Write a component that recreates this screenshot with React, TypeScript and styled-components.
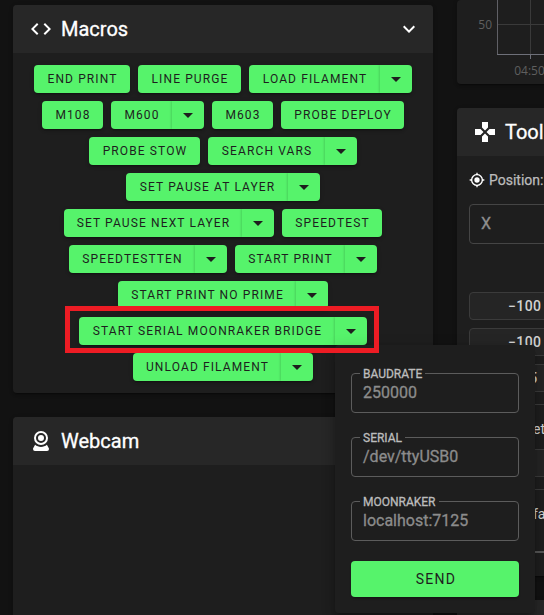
import React from 'react';
import styled, { createGlobalStyle } from 'styled-components';

const green = '#56f36b';

const GlobalStyle = createGlobalStyle`
  * { box-sizing: border-box; }
  body { margin: 0; background: #121212; overflow: hidden; }
`;

const Page = styled.div`
  position: relative;
  display: flex;
  gap: 24px;
  width: 544px;
  height: 615px;
  padding-left: 13px;
  overflow: hidden;
  background: #121212;
  color: #fff;
  font-family: Roboto, 'Liberation Sans', sans-serif;
`;

const Column = styled.div<{ $width: number; $top: number }>`
  display: flex;
  flex-direction: column;
  flex: none;
  gap: 24px;
  width: ${(p) => p.$width}px;
  padding-top: ${(p) => p.$top}px;
`;

const Card = styled.section<{ $height: number }>`
  flex: none;
  height: ${(p) => p.$height}px;
  border-radius: 4px;
  overflow: hidden;
  background: #1e1e1e;
  box-shadow: 0 3px 1px -2px rgba(0, 0, 0, 0.2), 0 2px 2px rgba(0, 0, 0, 0.14), 0 1px 5px rgba(0, 0, 0, 0.12);
`;

const CardHeader = styled.header`
  display: flex;
  align-items: center;
  height: 48px;
  padding: 0 12px 0 16px;
  background: #272727;
`;

const CardTitle = styled.h2`
  flex: 1;
  margin: 0 0 0 8px;
  font-size: 20px;
  font-weight: 400;
  letter-spacing: 0;
  line-height: 32px;
  white-space: nowrap;
  -webkit-text-stroke: 0.3px currentColor;
`;

const Icon = ({ d, size = 24 }: { d: string; size?: number }) => (
  <svg width={size} height={size} viewBox="0 0 24 24" fill="currentColor" aria-hidden>
    <path d={d} />
  </svg>
);

const icons = {
  code: 'M14.6,16.6L19.2,12L14.6,7.4L16,6L22,12L16,18L14.6,16.6M9.4,16.6L4.8,12L9.4,7.4L8,6L2,12L8,18L9.4,16.6Z',
  chevron: 'M7.41,8.58L12,13.17L16.59,8.58L18,10L12,16L6,10L7.41,8.58Z',
  menu: 'M7,10L12,15L17,10H7Z',
  gamepad:
    'M16.5,9L13.5,12L16.5,15H22V9M9,16.5V22H15V16.5L12,13.5M7.5,9H2V15H7.5L10.5,12M15,7.5V2H9V7.5L12,10.5L15,7.5Z',
  crosshairs:
    'M12,8A4,4 0 0,1 16,12A4,4 0 0,1 12,16A4,4 0 0,1 8,12A4,4 0 0,1 12,8M3.05,13H1V11H3.05C3.5,6.83 6.83,3.5 11,3.05V1H13V3.05C17.17,3.5 20.5,6.83 20.95,11H23V13H20.95C20.5,17.17 17.17,20.5 13,20.95V23H11V20.95C6.83,20.5 3.5,17.17 3.05,13M12,5A7,7 0 0,0 5,12A7,7 0 0,0 12,19A7,7 0 0,0 19,12A7,7 0 0,0 12,5Z',
  webcam:
    'M12,2A7,7 0 0,1 19,9A7,7 0 0,1 12,16A7,7 0 0,1 5,9A7,7 0 0,1 12,2M12,4A5,5 0 0,0 7,9A5,5 0 0,0 12,14A5,5 0 0,0 17,9A5,5 0 0,0 12,4M12,6A3,3 0 0,1 15,9A3,3 0 0,1 12,12A3,3 0 0,1 9,9A3,3 0 0,1 12,6M6,22A2,2 0 0,1 4,20C4,19.62 4.1,19.27 4.29,18.97L6.11,15.81C7.69,17.17 9.75,18 12,18C14.25,18 16.31,17.17 17.89,15.81L19.71,18.97C19.9,19.27 20,19.62 20,20A2,2 0 0,1 18,22H6Z',
};

const MacroList = styled.div`
  display: flex;
  flex-direction: column;
  gap: 8px;
  padding-top: 12px;
`;

const MacroRow = styled.div`
  display: flex;
  justify-content: center;
  gap: 8px;
`;

const MacroGroup = styled.div`
  display: flex;
  height: 28px;
  border-radius: 4px;
  overflow: hidden;
  background: ${green};
  box-shadow: 0 3px 1px -2px rgba(0, 0, 0, 0.2), 0 2px 2px rgba(0, 0, 0, 0.14), 0 1px 5px rgba(0, 0, 0, 0.12);
`;

const MacroButton = styled.button<{ $width: number }>`
  width: ${(p) => p.$width}px;
  padding: 0 0 0 1px;
  border: 0;
  background: none;
  color: #1e1e1e;
  font: 400 12px/28px Roboto, sans-serif;
  letter-spacing: 1.12px;
  white-space: nowrap;
`;

const MacroMenuButton = styled.button`
  display: flex;
  align-items: center;
  justify-content: center;
  width: 32px;
  padding: 0;
  border: 0;
  background: none;
  color: #1e1e1e;
  box-shadow: -1px 0 2px rgba(0, 0, 0, 0.14);
`;

type Macro = { name: string; width: number; menu?: boolean };

const macroRows: Macro[][] = [
  [
    { name: 'END PRINT', width: 96 },
    { name: 'LINE PURGE', width: 103 },
    { name: 'LOAD FILAMENT', width: 131, menu: true },
  ],
  [
    { name: 'M108', width: 61 },
    { name: 'M600', width: 61, menu: true },
    { name: 'M603', width: 61 },
    { name: 'PROBE DEPLOY', width: 123 },
  ],
  [
    { name: 'PROBE STOW', width: 111 },
    { name: 'SEARCH VARS', width: 117, menu: true },
  ],
  [{ name: 'SET PAUSE AT LAYER', width: 162, menu: true }],
  [
    { name: 'SET PAUSE NEXT LAYER', width: 178, menu: true },
    { name: 'SPEEDTEST', width: 100 },
  ],
  [
    { name: 'SPEEDTESTTEN', width: 126, menu: true },
    { name: 'START PRINT', width: 110, menu: true },
  ],
  [{ name: 'START PRINT NO PRIME', width: 178, menu: true }],
  [{ name: 'START SERIAL MOONRAKER BRIDGE', width: 256, menu: true }],
  [{ name: 'UNLOAD FILAMENT', width: 148, menu: true }],
];

const Chart = styled.svg`
  display: block;
  font: 12px 'Open Sans', 'Noto Sans', sans-serif;
`;

const PositionRow = styled.div`
  display: flex;
  align-items: center;
  gap: 4px;
  height: 16px;
  margin: 16px 0 0 12px;
  font-size: 14px;
  white-space: nowrap;

  span {
    color: #bcbcbc;
    -webkit-text-stroke: 0.25px currentColor;
  }
`;

const AxisInput = styled.div`
  width: 140px;
  height: 40px;
  margin: 16px 0 48px 12px;
  padding-left: 11px;
  border: 1px solid #454545;
  border-radius: 4px;
  color: #8e8e8e;
  font-size: 16px;
  line-height: 38px;
  -webkit-text-stroke: 0.3px currentColor;
`;

const JogButton = styled.div<{ $indent: number }>`
  width: 140px;
  height: 28px;
  margin: 0 0 8px 12px;
  padding-left: ${(p) => p.$indent}px;
  border: 1px solid #3b3b3b;
  border-radius: 4px;
  background: #252525;
  color: #d2d2d2;
  font-size: 14px;
  font-weight: 500;
  letter-spacing: 0.4px;
  line-height: 26px;
  white-space: nowrap;
`;

const ToolSection = styled.div<{ $height: number; $gap: number }>`
  height: ${(p) => p.$height}px;
  margin-top: ${(p) => p.$gap}px;
  border-top: 1px solid #3b3b3b;
`;

const SectionLabel = styled.div`
  height: 44px;
  padding-left: 76px;
  color: #d2d2d2;
  font-size: 14px;
  line-height: 48px;
`;

const SectionButton = styled.div`
  height: 28px;
  border: 1px solid #3b3b3b;
  background: #252525;
`;

const SliderTrack = styled.div`
  height: 2px;
  margin-top: 17px;
  background: #555;
`;

const Popup = styled.form`
  position: absolute;
  left: 335px;
  top: 345px;
  display: flex;
  flex-direction: column;
  gap: 24px;
  width: 200px;
  height: 268px;
  padding: 28px 16px 16px;
  border-radius: 4px;
  background: #1e1e1e;
  box-shadow: 0 5px 5px -3px rgba(0, 0, 0, 0.2), 0 8px 10px 1px rgba(0, 0, 0, 0.14), 0 3px 14px 2px rgba(0, 0, 0, 0.12);
`;

const Field = styled.div`
  position: relative;
  flex: none;
  height: 40px;
  padding-left: 11px;
  border: 1px solid #5c5c5c;
  border-radius: 4px;
  color: #8c8c8c;
  font-size: 16px;
  line-height: 38px;
  -webkit-text-stroke: 0.3px currentColor;
`;

const FieldLabel = styled.span`
  position: absolute;
  left: 8px;
  top: -8px;
  padding: 0 3px;
  background: #1e1e1e;
  color: #bcbcbc;
  font-size: 12px;
  line-height: 16px;
`;

const SendButton = styled.button`
  flex: none;
  height: 36px;
  margin-top: -4px;
  padding: 0 0 0 2px;
  border: 0;
  border-radius: 4px;
  background: ${green};
  color: #1e1e1e;
  font: 400 14px/36px Roboto, sans-serif;
  letter-spacing: 1.25px;
  box-shadow: 0 3px 1px -2px rgba(0, 0, 0, 0.2), 0 2px 2px rgba(0, 0, 0, 0.14);
`;

const Highlight = styled.div`
  position: absolute;
  left: 65px;
  top: 306px;
  width: 314px;
  height: 47px;
  border: 5px solid #ed1c24;
`;

const fields = [
  ['BAUDRATE', '250000'],
  ['SERIAL', '/dev/ttyUSB0'],
  ['MOONRAKER', 'localhost:7125'],
];

export default function App() {
  return (
    <>
      <GlobalStyle />
      <Page>
        <Column $width={420} $top={5}>
          <Card $height={388}>
            <CardHeader>
              <Icon d={icons.code} />
              <CardTitle>Macros</CardTitle>
              <Icon d={icons.chevron} />
            </CardHeader>
            <MacroList>
              {macroRows.map((row, i) => (
                <MacroRow key={i}>
                  {row.map((m) => (
                    <MacroGroup key={m.name}>
                      <MacroButton $width={m.width}>{m.name}</MacroButton>
                      {m.menu && (
                        <MacroMenuButton aria-label={`${m.name} parameters`}>
                          <Icon d={icons.menu} />
                        </MacroMenuButton>
                      )}
                    </MacroGroup>
                  ))}
                </MacroRow>
              ))}
            </MacroList>
          </Card>
          <Card $height={240}>
            <CardHeader>
              <Icon d={icons.webcam} />
              <CardTitle>Webcam</CardTitle>
            </CardHeader>
          </Card>
        </Column>

        <Column $width={140} $top={0}>
          <Card $height={84}>
            <Chart width="140" height="84">
              <path d="M41 24.5H140M73.5 0V54" stroke="#3a3a3a" fill="none" />
              <path d="M40.5 0V54" stroke="#606066" fill="none" />
              <path d="M40 54.5H140M73.5 54V59" stroke="#6e7079" fill="none" />
              <text x="35" y="29" textAnchor="end" fill="#5f5f5f">50</text>
              <text x="72.5" y="75" textAnchor="middle" fill="#5f5f5f">04:50</text>
            </Chart>
          </Card>
          <Card $height={468}>
            <CardHeader>
              <Icon d={icons.gamepad} />
              <CardTitle>Tool</CardTitle>
            </CardHeader>
            <PositionRow>
              <Icon d={icons.crosshairs} size={16} />
              <span>Position:</span>
            </PositionRow>
            <AxisInput>X</AxisInput>
            <JogButton $indent={38}>−100</JogButton>
            <JogButton $indent={38}>−100</JogButton>
            <JogButton $indent={51}>+5</JogButton>
            <ToolSection $height={85} $gap={12}>
              <SectionLabel>et</SectionLabel>
              <SectionButton />
            </ToolSection>
            <ToolSection $height={87} $gap={0}>
              <SectionLabel>fa</SectionLabel>
              <SliderTrack />
            </ToolSection>
          </Card>
          <Card $height={60}>
            <CardHeader />
          </Card>
        </Column>

        <Popup>
          {fields.map(([label, value]) => (
            <Field key={label}>
              <FieldLabel>{label}</FieldLabel>
              {value}
            </Field>
          ))}
          <SendButton type="button">SEND</SendButton>
        </Popup>
        <Highlight />
      </Page>
    </>
  );
}
